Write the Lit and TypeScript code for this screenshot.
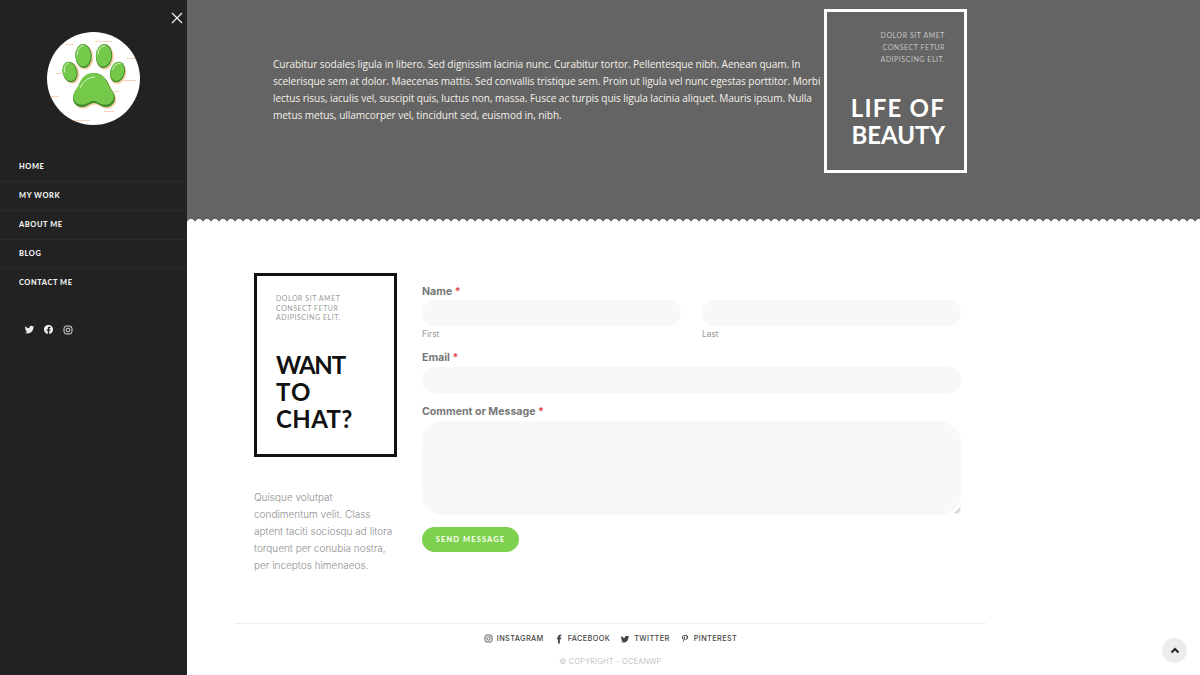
import { LitElement, html, css, svg } from "lit";
import { customElement } from "lit/decorators.js";

const tw = "M22.46 6c-.77.35-1.6.58-2.46.69.88-.53 1.56-1.37 1.88-2.38-.83.5-1.75.85-2.72 1.05C18.37 4.5 17.26 4 16 4c-2.35 0-4.27 1.92-4.27 4.29 0 .34.04.67.11.98C8.28 9.09 5.11 7.38 3 4.79c-.37.63-.58 1.37-.58 2.15 0 1.49.75 2.81 1.91 3.56-.71 0-1.37-.2-1.95-.5v.03c0 2.08 1.48 3.82 3.44 4.21-.36.1-.74.15-1.13.15-.27 0-.54-.03-.8-.08.54 1.69 2.11 2.95 4 2.98C6.43 18 4.56 18.67 2.53 18.67c-.35 0-.69-.02-1.03-.06C3.44 19.9 5.7 20.6 8.12 20.6c7.88 0 12.21-6.54 12.21-12.21 0-.19 0-.37-.01-.56.84-.6 1.56-1.36 2.14-2.23z";
const fbCircle = "M12 2C6.48 2 2 6.48 2 12c0 4.99 3.66 9.13 8.44 9.88v-6.99H7.9V12h2.54V9.8c0-2.51 1.49-3.89 3.78-3.89 1.09 0 2.24.19 2.24.19v2.46h-1.26c-1.24 0-1.63.77-1.63 1.56V12h2.78l-.45 2.89h-2.33v6.99C18.34 21.13 22 16.99 22 12c0-5.52-4.48-10-10-10z";
const fbF = "M14 8.5V6.6c0-.9.6-1.1 1-1.1h2.6V1.5H14C10.4 1.5 9.6 4.2 9.6 5.9v2.6H7v4h2.6v10H14v-10h3.1l.4-4H14z";
const pin = "M12.3 1.500C7.300 1.500 4.500 4.800 4.500 8.400c0 1.700.9 3.800 2.400 4.400.4.2.5 0 .7-.8 0-.2.2-.7.2-.9 0-.3 0-.4-.2-.6-.5-.6-.8-1.400-.8-2.300 0-2.500 1.900-4.700 5.100-4.700 2.700 0 4.300 1.700 4.300 4 0 3-1.400 5.500-3.300 5.500-1.100 0-1.900-.9-1.600-2 .3-1.300 1-2.700 1-3.700 0-.8-.4-1.600-1.400-1.600-1.100 0-2 1.200-2 2.700 0 .9.3 1.600.3 1.600l-1.400 5.500c-.3 1.600 0 3.700 0 3.900 0 .1.2.2.3 0 .1-.2 1.500-1.900 2-3.600l.8-3c.4.7 1.500 1.400 2.700 1.400 3.600 0 6-3.200 6-7.400C20 4.500 16.500 1.500 12.300 1.500z";

const insta = (s: number) => html`<svg width=${s} height=${s} viewBox="0 0 24 24" fill="none" stroke="currentColor" stroke-width="2.2"><rect x="2.5" y="2.5" width="19" height="19" rx="5.5"></rect><circle cx="12" cy="12" r="4.6"></circle><circle cx="17.6" cy="6.4" r="1" fill="currentColor" stroke="none"></circle></svg>`;
const solid = (d: string, s: number) => html`<svg width=${s} height=${s} viewBox="0 0 24 24" fill="currentColor"><path d=${d}></path></svg>`;

const pad = (cx: number, cy: number, rx: number, ry: number, rot: number) => svg`
  <g transform="rotate(${rot} ${cx} ${cy})">
    <ellipse cx=${cx + 1} cy=${cy + 1.2} rx=${rx + .6} ry=${ry + .4} fill="#f7cfa8"></ellipse>
    <ellipse cx=${cx} cy=${cy} rx=${rx} ry=${ry} fill="#3f8a2c"></ellipse>
    <ellipse cx=${cx - .4} cy=${cy - .5} rx=${rx - .6} ry=${ry - .9} fill="#74c94a"></ellipse>
    <path d="M${cx - rx + 2} ${cy - 1} Q${cx - rx + 2.4} ${cy - ry + 2.5} ${cx + 1} ${cy - ry + 1.4}" fill="none" stroke="#d6f2c4" stroke-width=".9"></path>
  </g>`;

const dash = (x: number, y: number, w: number) => svg`<rect x=${x} y=${y} width=${w} height="1" fill="#f8d2b4"></rect>`;

const bigPaw = "M47 41c-9 0-13 7-15 12-2 5-6 8-6 13 0 6 5 10 11 9 4-1 6-4 10-4 4 0 6 3 10 4 6 1 11-3 11-9 0-5-4-8-6-13-2-5-6-12-15-12z";

@customElement("app-root")
export class AppRoot extends LitElement {
  static styles = css`
    :host { display: block; width: 1200px; height: 675px; overflow: hidden; background: #fff; font-family: "Inter", "Liberation Sans", sans-serif; }
    .page { display: flex; height: 675px; position: relative; }
    .side { flex: 0 0 187px; background: #222; position: relative; display: flex; flex-direction: column; }
    .close { position: absolute; left: 171px; top: 12px; color: #eee; line-height: 0; }
    .logo { margin: 32px 0 0 47px; width: 93px; height: 93px; line-height: 0; }
    .nav { margin-top: 28px; display: flex; flex-direction: column; }
    .nav a { height: 28px; border-bottom: 1px solid #2b2b2b; display: flex; align-items: center; padding-left: 19px; color: #f2f2f2; font: 900 7.4px/1 "Lato", sans-serif; letter-spacing: .6px; }
    .nav a:last-child { border-bottom: none; }
    .soc { display: flex; gap: 8.6px; margin: 27px 0 0 23.5px; color: #eee; align-items: center; }
    .soc svg { display: block; }
    .main { flex: 1; display: flex; flex-direction: column; min-width: 0; }
    .hero { height: 223px; flex: none; background: repeating-conic-gradient(#686868 0 25%, #606060 0 50%) 0 0 / 2px 2px; position: relative; display: flex; padding: 9px 0 0 86px; box-sizing: border-box; }
    .hero::after { content: ""; position: absolute; left: 0; right: 0; bottom: 0; height: 5px;
      background: radial-gradient(circle at 4px 5px, #fff 3.7px, transparent 4.2px) 0 0 / 8px 5px repeat-x; }
    .lede { margin: 47px 0 0; width: 551px; flex: none; white-space: nowrap; color: #f4f0e8; font: 400 10.1px/17px "Open Sans", sans-serif; letter-spacing: -.07px; }
    .hbox { width: 143px; height: 164px; box-sizing: border-box; border: 3px solid #fff; padding: 17px 19px 0 0; text-align: right; color: #fff; flex: none; }
    .small { font: 400 7px/12px "Lato", sans-serif; letter-spacing: .55px; margin: 0; }
    .hbox .small { color: #c4c4c4; }
    .big { font: 700 24px/27px "Lato", sans-serif; letter-spacing: 1.2px; margin: 0; }
    .hbox .big { margin-top: 29px; text-align: right; }
    .beauty { letter-spacing: 0; }
    .content { flex: 1; display: flex; padding: 50px 0 0 67px; }
    .lcol { width: 143px; flex: none; }
    .cbox { width: 143px; height: 184px; box-sizing: border-box; border: 3px solid #111; padding: 18px 0 0 19px; color: #111; }
    .cbox .small { color: #9a9a9a; line-height: 9.7px; }
    .cbox .big { margin-top: 28px; }
    .want { letter-spacing: -1.2px; }
    .chat { letter-spacing: .4px; }
    .desc { margin: 32px 0 0; width: 143px; white-space: nowrap; font: 300 10px/17px "Inter", sans-serif; color: #8e8e8e; }
    .form { margin-left: 25px; width: 539px; flex: none; display: flex; flex-direction: column; }
    label.t { font: 700 10.6px/14px "Inter", sans-serif; color: #777; display: block; margin-top: 12px; }
    label.after-row { margin-top: 11px; }
    .req { color: #e05050; }
    .in { background: #f8f8f8; border-radius: 13px; height: 26px; margin-top: 2px; }
    .first { margin-top: 1px; }
    .row { display: flex; gap: 21px; }
    .row > div { flex: 1; }
    .sub { font: 400 8.4px/11px "Inter", sans-serif; color: #999; margin-top: 3px; }
    .area { background: #f8f8f8; border-radius: 22px; height: 94px; margin-top: 2px; position: relative; }
    .grip { position: absolute; right: 0; bottom: 1px; line-height: 0; }
    .btn { margin-top: 12px; width: 97px; height: 25px; border-radius: 13px; background: #7ed14e; color: #f3fbe9; font: 900 7.6px/25px "Lato", sans-serif; letter-spacing: 1.05px; text-align: center; }
    .foot { position: absolute; left: 235px; top: 623px; width: 751px; border-top: 1px solid #eee; text-align: center; }
    .links { display: flex; justify-content: center; align-items: center; gap: 10px; height: 29px; font: 500 7.3px/1 "Inter", sans-serif; letter-spacing: .4px; color: #444; }
    .links span { display: flex; align-items: center; gap: 4px; }
    .links svg { display: block; }
    .copy { font: 300 7.3px/1 "Inter", sans-serif; letter-spacing: .3px; color: #b0b0b0; margin-top: 5px; }
    .top { position: absolute; left: 1162px; top: 638px; width: 25px; height: 25px; border-radius: 50%; background: #ececec; display: flex; align-items: center; justify-content: center; color: #222; }
  `;

  render() {
    return html`<div class="page">
      <aside class="side">
        <div class="close"><svg width="12" height="12" viewBox="0 0 12 12" stroke="currentColor" stroke-width="1.3"><path d="M1 1l10 10M11 1L1 11"></path></svg></div>
        <div class="logo"><svg width="93" height="93" viewBox="0 0 93 93">
          <circle cx="46.5" cy="46.5" r="46.5" fill="#fff"></circle>
          ${dash(19, 12, 8)}${dash(48, 9, 6)}${dash(56, 9, 9)}${dash(79, 26, 9)}${dash(9, 41, 6)}${dash(74, 48, 15)}${dash(4, 64, 8)}${dash(57, 79, 10)}${dash(27, 88, 16)}${dash(67, 59, 5)}
          ${pad(36.5, 24, 8.2, 12, -3)}${pad(57, 24, 8.2, 12, 3)}${pad(23, 40, 7.4, 10.5, -14)}${pad(70.5, 40, 7.4, 10.5, 14)}
          <path d=${bigPaw} fill="#f7cfa8" transform="translate(1.200 1.500)"></path>
          <path d=${bigPaw} fill="#3f8a2c"></path>
          <path d=${bigPaw} fill="#74c94a" transform="translate(46.500 41) scale(.965 .93) translate(-47 -41)"></path>
          <path d="M33 56c3-6 7-10.500 15-11" fill="none" stroke="#d6f2c4" stroke-width="1"></path>
        </svg></div>
        <nav class="nav">
          ${["HOME", "MY WORK", "ABOUT ME", "BLOG", "CONTACT ME"].map((n) => html`<a>${n}</a>`)}
        </nav>
        <div class="soc">${solid(tw, 11)}${solid(fbCircle, 11)}${insta(10)}</div>
      </aside>
      <main class="main">
        <section class="hero">
          <p class="lede">Curabitur sodales ligula in libero. Sed dignissim lacinia nunc. Curabitur tortor. Pellentesque nibh. Aenean quam. In<br>scelerisque sem at dolor. Maecenas mattis. Sed convallis tristique sem. Proin ut ligula vel nunc egestas porttitor. Morbi<br>lectus risus, iaculis vel, suscipit quis, luctus non, massa. Fusce ac turpis quis ligula lacinia aliquet. Mauris ipsum. Nulla<br>metus metus, ullamcorper vel, tincidunt sed, euismod in, nibh.</p>
          <div class="hbox">
            <p class="small">DOLOR SIT AMET<br>CONSECT FETUR<br>ADIPISCING ELIT.</p>
            <h2 class="big">LIFE OF<br><span class="beauty">BEAUTY</span></h2>
          </div>
        </section>
        <section class="content">
          <div class="lcol">
            <div class="cbox">
              <p class="small">DOLOR SIT AMET<br>CONSECT FETUR<br>ADIPISCING ELIT.</p>
              <h2 class="big"><span class="want">WANT</span><br>TO<br><span class="chat">CHAT?</span></h2>
            </div>
            <p class="desc">Quisque volutpat<br>condimentum velit. Class<br>aptent taciti sociosqu ad litora<br>torquent per conubia nostra,<br>per inceptos himenaeos.</p>
          </div>
          <div class="form">
            <label class="t">Name <span class="req">*</span></label>
            <div class="row">
              <div><div class="in first"></div><div class="sub">First</div></div>
              <div><div class="in first"></div><div class="sub">Last</div></div>
            </div>
            <label class="t after-row">Email <span class="req">*</span></label>
            <div class="in"></div>
            <label class="t">Comment or Message <span class="req">*</span></label>
            <div class="area"><span class="grip"><svg width="7" height="7" viewBox="0 0 7 7" stroke="#999" stroke-width=".8"><path d="M0.500 6.500l6-6M3 6.500l3.500-3.500"></path></svg></span></div>
            <div class="btn">SEND MESSAGE</div>
          </div>
        </section>
      </main>
      <footer class="foot">
        <div class="links">
          <span>${insta(9)}INSTAGRAM</span>
          <span>${solid(fbF, 10)}FACEBOOK</span>
          <span>${solid(tw, 10)}TWITTER</span>
          <span>${solid(pin, 10)}PINTEREST</span>
        </div>
        <div class="copy">© COPYRIGHT - OCEANWP</div>
      </footer>
      <div class="top"><svg width="10" height="7" viewBox="0 0 10 7" fill="none" stroke="currentColor" stroke-width="2"><path d="M1.500 5.500L5 2l3.500 3.500"></path></svg></div>
    </div>`;
  }
}
